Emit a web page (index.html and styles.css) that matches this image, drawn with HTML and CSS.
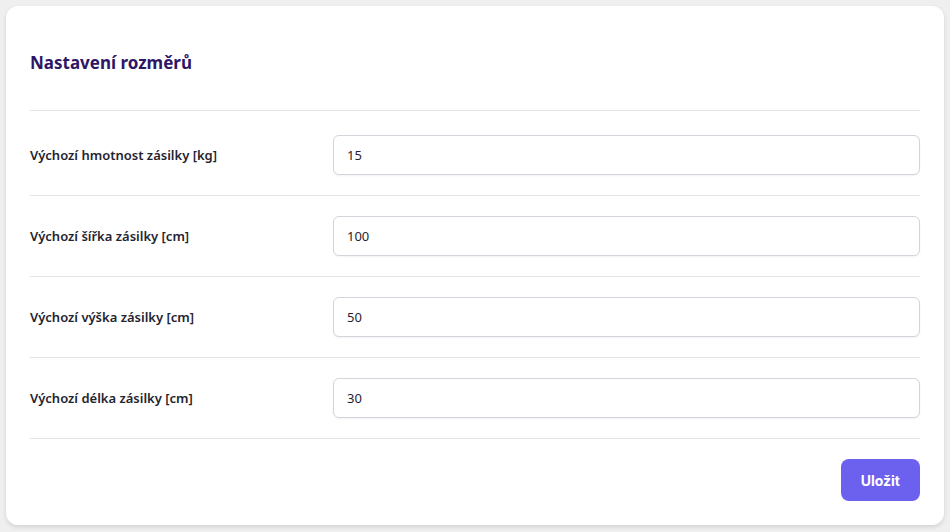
FILE: index.html
```html
<!DOCTYPE html>
<html lang="cs">

<head>
    <meta charset="UTF-8">
    <meta name="viewport" content="width=device-width, initial-scale=1.0">
    <link rel="stylesheet" href="styles.css">
</head>

<body>

    <div class="card">
        <div class="card-header">
            <h2 class="card-title">Nastavení rozměrů</h2>
        </div>

        <form class="settings-form">
            <div class="form-row first">
                <label class="form-label" for="weight">Výchozí hmotnost zásilky [kg]</label>
                <input class="form-input" id="weight" type="text" value="15">
            </div>
            <div class="form-row">
                <label class="form-label" for="width">Výchozí šířka zásilky [cm]</label>
                <input class="form-input" id="width" type="text" value="100">
            </div>
            <div class="form-row">
                <label class="form-label" for="height">Výchozí výška zásilky [cm]</label>
                <input class="form-input" id="height" type="text" value="50">
            </div>
            <div class="form-row">
                <label class="form-label" for="length">Výchozí délka zásilky [cm]</label>
                <input class="form-input" id="length" type="text" value="30">
            </div>

            <div class="form-footer">
                <button class="btn-save" type="button">Uložit</button>
            </div>
        </form>
    </div>

</body>

</html>
```

FILE: styles.css
```css
* {
    margin: 0;
    padding: 0;
    box-sizing: border-box;
}

body {
    margin: 0;
    padding: 6px;
    background-color: #efefef;
    font-family: "Noto Sans", "Open Sans", sans-serif;
    color: #1f2430;
}

.card {
    background-color: #fff;
    border-radius: 12px;
    box-shadow: 0 2px 4px rgba(0, 0, 0, 0.12);
    padding: 0 24px 24px;
}

.card-header {
    padding: 45px 0 35px;
    border-bottom: 1px solid #e4e4e7;
}

.card-title {
    font-size: 17px;
    line-height: 24px;
    font-weight: 700;
    color: #2e1667;
}

.form-row {
    display: grid;
    grid-template-columns: 303px 1fr;
    align-items: center;
    padding: 20px 0;
    border-bottom: 1px solid #e4e4e7;
}

.form-row.first {
    padding-top: 24px;
}

.form-label {
    font-size: 13px;
    font-weight: 600;
    color: #1f2430;
}

.form-input {
    height: 40px;
    width: 100%;
    border: 1px solid #d4d4dc;
    border-radius: 6px;
    padding: 0 13px;
    font-family: inherit;
    font-size: 13px;
    color: #1f2430;
    background: #fff;
    box-shadow: 0 1px 2px rgba(0, 0, 0, 0.05);
    outline: none;
}

.form-footer {
    display: flex;
    justify-content: flex-end;
    padding-top: 20px;
}

.btn-save {
    height: 42px;
    padding: 0 20px;
    border: none;
    border-radius: 8px;
    background-color: #6c61ee;
    color: #fff;
    font-family: Inter, "Noto Sans", sans-serif;
    font-size: 14px;
    font-weight: 700;
    cursor: pointer;
}
```
